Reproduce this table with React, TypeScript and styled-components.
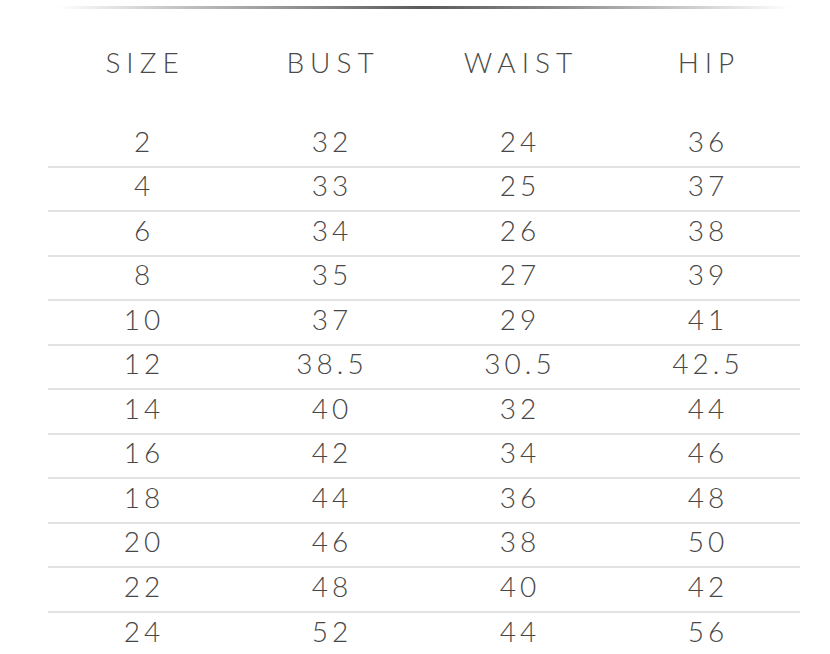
import React from 'react'
import styled, { createGlobalStyle } from 'styled-components'

const GlobalStyle = createGlobalStyle`
    html, body {
        margin: 0;
        padding: 0;
        background: #ffffff;
    }
    body {
        font-family: Lato, "Open Sans", sans-serif;
    }
`

const Page = styled.div`
    width: 830px;
    height: 654px;
    padding-top: 6px;
    box-sizing: border-box;
    background: #ffffff;
`

const TopRule = styled.div`
    height: 3px;
    margin: 0 40px 0 58px;
    border-radius: 2px;
    background: linear-gradient(
        to right,
        rgba(150, 150, 150, 0) 0%,
        #c8c8c8 15%,
        #8a8a8a 35%,
        #5a5a5a 50%,
        #8a8a8a 68%,
        #c8c8c8 85%,
        rgba(150, 150, 150, 0) 100%
    );
    filter: blur(0.6px);
`

const Table = styled.div`
    margin: 31px 30px 0 48px;
    width: 752px;
`

const HeadRow = styled.div`
    display: grid;
    grid-template-columns: repeat(4, 1fr);
    height: 44px;
    margin-bottom: 39px;
`

const HeadCell = styled.div`
    display: flex;
    align-items: center;
    justify-content: center;
    font-weight: 300;
    font-size: 28px;
    letter-spacing: 6px;
    padding-left: 6px;
    color: #4a4a4a;
`

const Row = styled.div<{ $last?: boolean }>`
    display: grid;
    grid-template-columns: repeat(4, 1fr);
    height: 44.5px;
    box-sizing: border-box;
    border-bottom: ${p => (p.$last ? 'none' : '2px solid #e2e2e2')};
`

const Cell = styled.div`
    display: flex;
    align-items: center;
    justify-content: center;
    padding-bottom: 7px;
    padding-left: 4px;
    font-weight: 300;
    font-size: 28px;
    letter-spacing: 4px;
    color: #474747;
`

const headers = ['SIZE', 'BUST', 'WAIST', 'HIP']

const rows = [
    ['2', '32', '24', '36'],
    ['4', '33', '25', '37'],
    ['6', '34', '26', '38'],
    ['8', '35', '27', '39'],
    ['10', '37', '29', '41'],
    ['12', '38.5', '30.5', '42.5'],
    ['14', '40', '32', '44'],
    ['16', '42', '34', '46'],
    ['18', '44', '36', '48'],
    ['20', '46', '38', '50'],
    ['22', '48', '40', '42'],
    ['24', '52', '44', '56'],
]

export default function App() {
    return (
        <Page>
            <GlobalStyle />
            <TopRule />
            <Table>
                <HeadRow>
                    {headers.map(h => (
                        <HeadCell key={h}>{h}</HeadCell>
                    ))}
                </HeadRow>
                {rows.map((r, i) => (
                    <Row key={r[0]} $last={i === rows.length - 1}>
                        {r.map((v, j) => (
                            <Cell key={j}>{v}</Cell>
                        ))}
                    </Row>
                ))}
            </Table>
        </Page>
    )
}
